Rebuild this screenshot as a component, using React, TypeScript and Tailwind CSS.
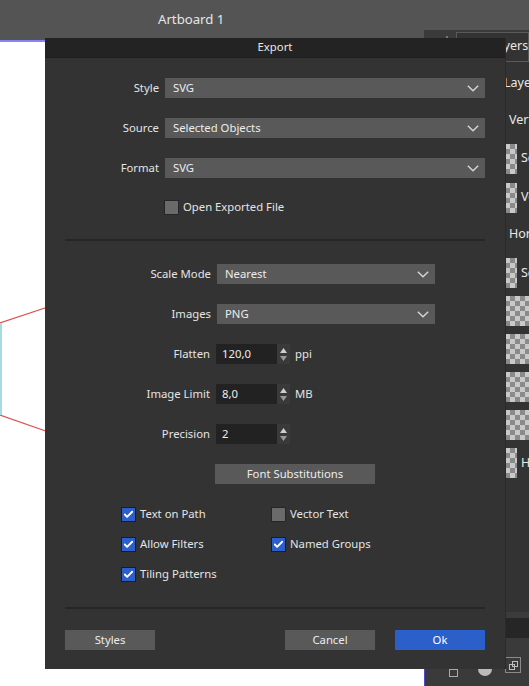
import { Check } from 'lucide-react';

function Chevron() {
  return (
    <svg width="12" height="7" viewBox="0 0 12 7" className="shrink-0">
      <path d="M0.8 0.8 L6 5.8 L11.2 0.8" fill="none" stroke="#d6d6d6" strokeWidth="1.4" />
    </svg>
  );
}

function Select({ value, width }: { value: string; width: string }) {
  return (
    <div className={`flex h-[20px] items-center justify-between bg-[#595959] pl-[8px] pr-[6px] text-[#ececec] ${width}`}>
      <span>{value}</span>
      <Chevron />
    </div>
  );
}

function Spin({ value, unit }: { value: string; unit?: string }) {
  return (
    <div className="flex items-center">
      <div className="flex h-[20px] w-[61px] items-center bg-[#222222] pl-[6px] text-[#ececec]">{value}</div>
      <div className="flex h-[20px] w-[13px] flex-col items-center justify-center gap-[3px] bg-[#3a3a3a]">
        <svg width="7" height="5" viewBox="0 0 7 5"><path d="M3.5 0 L7 5 L0 5 Z" fill="#cfcfcf" /></svg>
        <svg width="7" height="5" viewBox="0 0 7 5"><path d="M0 0 L7 0 L3.5 5 Z" fill="#9a9a9a" /></svg>
      </div>
      {unit && <span className="ml-[5px] text-[#e4e4e4]">{unit}</span>}
    </div>
  );
}

function Box({ checked, label }: { checked: boolean; label: string }) {
  return (
    <div className="flex h-[15px] items-center gap-[4px]">
      <div
        className={`flex h-[15px] w-[15px] items-center justify-center border ${
          checked ? 'border-[#1c1c1c] bg-[#2d5fcc]' : 'border-[#262626] bg-[#6a6a6a]'
        }`}
      >
        {checked && <Check className="h-[11px] w-[11px] text-white" strokeWidth={4} />}
      </div>
      <span className="text-[#e4e4e4]">{label}</span>
    </div>
  );
}

function Row({ label, labelW, children }: { label: string; labelW: string; children: React.ReactNode }) {
  return (
    <div className="flex h-[20px] items-center gap-[6px]">
      <span className={`text-right text-[#e4e4e4] ${labelW}`}>{label}</span>
      {children}
    </div>
  );
}

function Thumb({ wide }: { wide?: boolean }) {
  return (
    <div
      className={`h-[30px] shrink-0 ${wide ? 'w-[40px]' : 'w-[12px]'} bg-[conic-gradient(#8a8a8a_25%,#c9c9c9_0_50%,#8a8a8a_0_75%,#c9c9c9_0)] bg-[length:10px_10px]`}
    />
  );
}

export default function App() {
  return (
    <div className="relative h-[686px] w-[529px] overflow-hidden bg-white font-['Noto_Sans',sans-serif] text-[11.3px]">
      {/* Top bar */}
      <div className="h-[40px] bg-[#545454] pl-[158px] pt-[10px] text-[13.2px] text-[#e6e6e6]">Artboard 1</div>
      <div className="h-[2px] bg-[#8484f4]" />

      {/* Canvas shape */}
      <svg className="absolute left-0 top-0" width="100" height="686">
        <line x1="0" y1="323" x2="60" y2="303" stroke="#e05050" strokeWidth="1.2" />
        <line x1="0" y1="415" x2="60" y2="436" stroke="#e05050" strokeWidth="1.2" />
        <rect x="0" y="323" width="2" height="92" fill="#a6dbe0" />
      </svg>

      {/* Layers panel */}
      <div className="absolute bottom-0 left-[424px] top-[30px] flex w-[105px] flex-col bg-[#333333] text-[12.5px] text-[#e8e8e8]">
        <div className="flex h-[26px] items-start bg-[#3a3a3a] pl-[12px] pt-[2px]">
          <div className="mt-[4px] h-[10px] w-[10px] rounded-full bg-[#6a6a6a]" />
          <div className="ml-[10px] mt-[4px] h-[8px] w-[4px] border-x border-[#777]" />
          <div className="ml-[8px] h-[30px] flex-1 border border-[#5a5a5a] bg-[#333] pl-[33px] pt-[4px]">Layers</div>
        </div>
        <div className="mt-[18px] pl-[80px]">Layer</div>
        <div className="mt-[18px] pl-[85px]">Vert</div>
        <div className="mt-[14px] flex flex-col gap-[9px]">
          <div className="flex items-center gap-[4px] pl-[81px]"><Thumb /><span>Sc</span></div>
          <div className="flex items-center gap-[4px] pl-[81px]"><Thumb /><span>Ve</span></div>
        </div>
        <div className="mt-[12px] pl-[85px]">Hor</div>
        <div className="mt-[15px] flex flex-col gap-[8px]">
          <div className="flex items-center gap-[4px] pl-[81px]"><Thumb /><span>Sc</span></div>
          <div className="pl-[81px]"><Thumb wide /></div>
          <div className="pl-[81px]"><Thumb wide /></div>
          <div className="pl-[81px]"><Thumb wide /></div>
          <div className="pl-[81px]"><Thumb wide /></div>
          <div className="flex items-center gap-[4px] pl-[81px]"><Thumb /><span>H</span></div>
        </div>
        <div className="mt-auto h-[6px] bg-[#3b3b3b]" />
        <div className="h-[20px] bg-[#262626]" />
        <div className="flex h-[48px] items-start border-l border-[#4b4bd0] bg-[#3a3a3a]">
          <div className="ml-[24px] mt-[31px] h-[8px] w-[9px] border border-[#aaa]" />
          <div className="ml-[20px] mt-[31px] h-[7px] w-[14px] rounded-b-full bg-[#bbb]" />
          <div className="ml-[13px] mt-[19px] flex h-[16px] w-[16px] items-center justify-center border border-[#8a8a8a]">
            <div className="relative h-[9px] w-[9px]">
              <div className="absolute left-0 top-[3px] h-[6px] w-[6px] border border-[#bbb]" />
              <div className="absolute left-[3px] top-0 h-[6px] w-[6px] border border-[#bbb]" />
            </div>
          </div>
        </div>
      </div>

      {/* Export dialog */}
      <div className="absolute left-[45px] top-[38px] flex h-[631px] w-[460px] flex-col bg-[#333333] shadow-[1px_0_0_#2a2a2a]">
        <div className="flex h-[20px] items-center justify-center border-b border-[#1e1e1e] bg-[#232323] text-[#e8e8e8]">Export</div>
        <div className="flex flex-col px-[20px] pt-[20px]">
          <div className="flex flex-col gap-[20px]">
            <Row label="Style" labelW="w-[94px]"><Select value="SVG" width="w-[320px]" /></Row>
            <Row label="Source" labelW="w-[94px]"><Select value="Selected Objects" width="w-[320px]" /></Row>
            <Row label="Format" labelW="w-[94px]"><Select value="SVG" width="w-[320px]" /></Row>
          </div>
          <div className="mt-[22px] pl-[99px]"><Box checked={false} label="Open Exported File" /></div>
          <div className="mt-[24px] h-[2px] bg-[#262626]" />

          <div className="mt-[23px] flex flex-col gap-[20px]">
            <Row label="Scale Mode" labelW="w-[146px]"><Select value="Nearest" width="w-[218px]" /></Row>
            <Row label="Images" labelW="w-[146px]"><Select value="PNG" width="w-[218px]" /></Row>
            <Row label="Flatten" labelW="w-[145px]"><Spin value="120,0" unit="ppi" /></Row>
            <Row label="Image Limit" labelW="w-[145px]"><Spin value="8,0" unit="MB" /></Row>
            <Row label="Precision" labelW="w-[145px]"><Spin value="2" /></Row>
          </div>
          <div className="ml-[150px] mt-[20px] flex h-[20px] w-[160px] items-center justify-center self-start bg-[#595959] text-[#ececec]">Font Substitutions</div>

          <div className="mt-[23px] grid grid-cols-[150px_150px] gap-y-[15px] pl-[56px]">
            <Box checked label="Text on Path" />
            <Box checked={false} label="Vector Text" />
            <Box checked label="Allow Filters" />
            <Box checked label="Named Groups" />
            <Box checked label="Tiling Patterns" />
          </div>
          <div className="mt-[25px] h-[2px] bg-[#262626]" />

          <div className="mt-[21px] flex items-center">
            <div className="flex h-[20px] w-[90px] items-center justify-center bg-[#595959] text-[#ececec]">Styles</div>
            <div className="ml-auto flex h-[20px] w-[90px] items-center justify-center bg-[#595959] text-[#ececec]">Cancel</div>
            <div className="ml-[20px] flex h-[20px] w-[90px] items-center justify-center bg-[#2b5fc9] text-white">Ok</div>
          </div>
        </div>
      </div>
    </div>
  );
}
